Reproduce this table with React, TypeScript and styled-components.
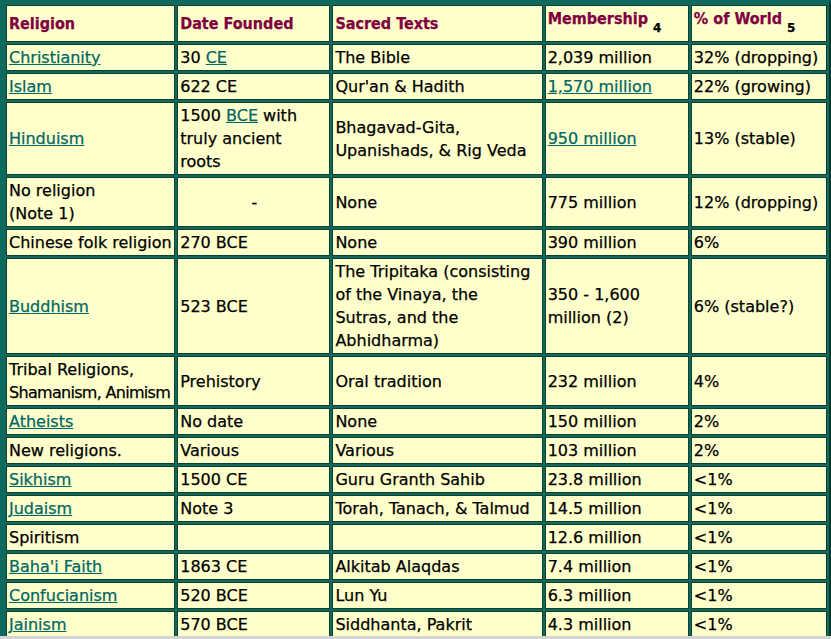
import { createGlobalStyle, styled } from "styled-components"
import type { ReactNode } from "react"

const GlobalStyle = createGlobalStyle`
  html, body {
    margin: 0;
    padding: 0;
    background: #0a6a5e;
  }
`

const Table = styled.table`
  width: 831px;
  table-layout: fixed;
  border-collapse: separate;
  border-spacing: 2px;
  background: #1a6656;
  border-style: solid;
  border-width: 3px 2px 3px 4px;
  border-color: #0a6a5e #003a2e #003a2e #0a6a5e;
  font-family: "DejaVu Sans", Verdana, sans-serif;
  font-size: 16px;
  line-height: 23px;
  color: #000;
  -webkit-text-stroke: 0.25px currentColor;
`

const HeadCell = styled.th<{ $width: number }>`
  width: ${(p) => p.$width}px;
  box-sizing: border-box;
  padding: 1px 1px 1px 2px;
  border: 1px solid #00443a;
  background: #ffffcc;
  color: #800040;
  font-family: "DejaVu Sans Condensed", "DejaVu Sans", sans-serif;
  font-weight: bold;
  text-align: left;
  vertical-align: middle;
  white-space: nowrap;
`

const Note = styled.sub`
  font-family: "DejaVu Sans", sans-serif;
  font-size: 12px;
  line-height: 23px;
  vertical-align: -8px;
  color: #000;
`

const Cell = styled.td<{ $center?: boolean }>`
  box-sizing: border-box;
  padding: 1px 1px 1px 2px;
  border: 1px solid #00443a;
  background: #ffffcc;
  text-align: ${(p) => (p.$center ? "center" : "left")};
  vertical-align: middle;
  white-space: nowrap;
  overflow: hidden;
`

// Tahoma in the original is narrower than DejaVu on this line
const Squeeze = styled.span`
  letter-spacing: -0.7px;
`

const Anchor = styled.a`
  color: #006666;
  text-decoration: underline;
`

const WindowEdge = styled.div`
  position: fixed;
  left: 0;
  right: 0;
  bottom: 0;
  height: 3px;
  background: #d4d4d4;
`

function TextLink({ href, children }: { href: string; children: ReactNode }) {
  return <Anchor href={href}>{children}</Anchor>
}

type Row = {
  religion: ReactNode
  founded: ReactNode
  texts: ReactNode
  members: ReactNode
  share: ReactNode
  centerFounded?: boolean
}

const rows: Row[] = [
  {
    religion: <TextLink href="#">Christianity</TextLink>,
    founded: (
      <>
        30 <TextLink href="#">CE</TextLink>
      </>
    ),
    texts: "The Bible",
    members: "2,039 million",
    share: "32% (dropping)",
  },
  {
    religion: <TextLink href="#">Islam</TextLink>,
    founded: "622 CE",
    texts: "Qur'an & Hadith",
    members: <TextLink href="#">1,570 million</TextLink>,
    share: "22% (growing)",
  },
  {
    religion: <TextLink href="#">Hinduism</TextLink>,
    founded: (
      <>
        1500 <TextLink href="#">BCE</TextLink> with
        <br />
        truly ancient
        <br />
        roots
      </>
    ),
    texts: (
      <>
        Bhagavad-Gita,
        <br />
        Upanishads, & Rig Veda
      </>
    ),
    members: <TextLink href="#">950 million</TextLink>,
    share: "13% (stable)",
  },
  {
    religion: (
      <>
        No religion
        <br />
        (Note 1)
      </>
    ),
    founded: "-",
    centerFounded: true,
    texts: "None",
    members: "775 million",
    share: "12% (dropping)",
  },
  {
    religion: "Chinese folk religion",
    founded: "270 BCE",
    texts: "None",
    members: "390 million",
    share: "6%",
  },
  {
    religion: <TextLink href="#">Buddhism</TextLink>,
    founded: "523 BCE",
    texts: (
      <>
        The Tripitaka (consisting
        <br />
        of the Vinaya, the
        <br />
        Sutras, and the
        <br />
        Abhidharma)
      </>
    ),
    members: (
      <>
        350 - 1,600
        <br />
        million (2)
      </>
    ),
    share: "6% (stable?)",
  },
  {
    religion: (
      <>
        Tribal Religions,
        <br />
        <Squeeze>Shamanism, Animism</Squeeze>
      </>
    ),
    founded: "Prehistory",
    texts: "Oral tradition",
    members: "232 million",
    share: "4%",
  },
  {
    religion: <TextLink href="#">Atheists</TextLink>,
    founded: "No date",
    texts: "None",
    members: "150 million",
    share: "2%",
  },
  {
    religion: "New religions.",
    founded: "Various",
    texts: "Various",
    members: "103 million",
    share: "2%",
  },
  {
    religion: <TextLink href="#">Sikhism</TextLink>,
    founded: "1500 CE",
    texts: "Guru Granth Sahib",
    members: "23.8 million",
    share: "<1%",
  },
  {
    religion: <TextLink href="#">Judaism</TextLink>,
    founded: "Note 3",
    texts: "Torah, Tanach, & Talmud",
    members: "14.5 million",
    share: "<1%",
  },
  {
    religion: "Spiritism",
    founded: "",
    texts: "",
    members: "12.6 million",
    share: "<1%",
  },
  {
    religion: <TextLink href="#">Baha'i Faith</TextLink>,
    founded: "1863 CE",
    texts: "Alkitab Alaqdas",
    members: "7.4 million",
    share: "<1%",
  },
  {
    religion: <TextLink href="#">Confucianism</TextLink>,
    founded: "520 BCE",
    texts: "Lun Yu",
    members: "6.3 million",
    share: "<1%",
  },
  {
    religion: <TextLink href="#">Jainism</TextLink>,
    founded: "570 BCE",
    texts: "Siddhanta, Pakrit",
    members: "4.3 million",
    share: "<1%",
  },
]

export default function App() {
  return (
    <>
      <GlobalStyle />
      <Table>
        <thead>
          <tr>
            <HeadCell $width={169}>Religion</HeadCell>
            <HeadCell $width={153}>Date Founded</HeadCell>
            <HeadCell $width={210}>Sacred Texts</HeadCell>
            <HeadCell $width={144}>
              Membership <Note>4</Note>
            </HeadCell>
            <HeadCell $width={136}>
              % of World <Note>5</Note>
            </HeadCell>
          </tr>
        </thead>
        <tbody>
          {rows.map((row, i) => (
            <tr key={i}>
              <Cell>{row.religion}</Cell>
              <Cell $center={row.centerFounded}>{row.founded}</Cell>
              <Cell>{row.texts}</Cell>
              <Cell>{row.members}</Cell>
              <Cell>{row.share}</Cell>
            </tr>
          ))}
        </tbody>
      </Table>
      <WindowEdge />
    </>
  )
}
